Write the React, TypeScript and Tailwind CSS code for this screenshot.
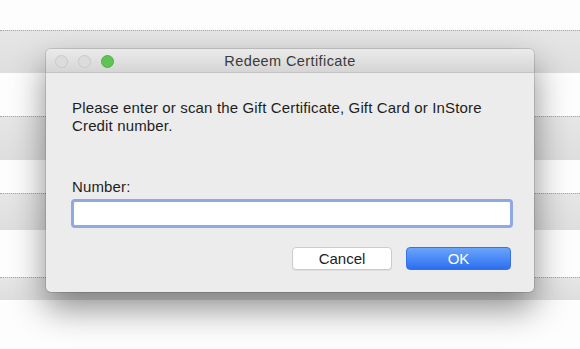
import React from "react";

const font = { fontFamily: '"Liberation Sans", Arial, sans-serif' };

const Stripe = ({ gray, dotted, h }: { gray?: boolean; dotted?: boolean; h: string }) => (
  <div
    className={`${h} ${gray ? "bg-gradient-to-b from-[#e6e6e6] to-[#dedede]" : "bg-[#fdfdfd]"} ${
      dotted ? "border-t border-dotted border-[#a8a8a8]" : ""
    }`}
  />
);

const Light = ({ color }: { color: string }) => (
  <span className={`w-[13px] h-[13px] rounded-full ${color}`} />
);

export default function App() {
  return (
    <div className="relative w-[580px] h-[349px] overflow-hidden bg-white" style={font}>
      {/* table rows behind the sheet */}
      <div className="flex flex-col">
        <Stripe h="h-[30px]" />
        <Stripe h="h-[43px]" gray dotted />
        <Stripe h="h-[43px]" />
        <Stripe h="h-[44px]" gray dotted />
        <Stripe h="h-[33px]" />
        <Stripe h="h-[37px]" gray dotted />
        <Stripe h="h-[47px]" />
        <Stripe h="h-[23px]" gray dotted />
        <Stripe h="h-[49px]" />
      </div>

      {/* dialog */}
      <div className="absolute left-[46px] top-[49px] w-[488px] h-[243px] rounded-[5px] bg-[#ececec] shadow-[0_0_0_1px_rgba(0,0,0,0.12),0_16px_34px_rgba(0,0,0,0.45)] overflow-hidden flex flex-col">
        <div className="relative h-[24px] shrink-0 flex items-center bg-gradient-to-b from-[#ebebeb] to-[#d5d5d5] border-b border-[#c4c4c4]">
          <div className="flex items-center gap-[10px] pl-[9px] pt-[1px]">
            <Light color="bg-[#dcdcdc] border border-[#c9c9c9]" />
            <Light color="bg-[#dcdcdc] border border-[#c9c9c9]" />
            <Light color="bg-[#5fc454] border border-[#52b048]" />
          </div>
          <div className="absolute inset-0 pt-[2px] flex items-center justify-center text-[14.5px] tracking-[0.4px] text-[#3a3a3a]">
            Redeem Certificate
          </div>
        </div>

        <div className="flex flex-col px-[26px] pt-[26px]">
          <p className="text-[15px] leading-[18px] tracking-[0.15px] text-[#1e1e1e]">
            Please enter or scan the Gift Certificate, Gift Card or InStore
            <br />
            Credit number.
          </p>

          <label className="mt-[43px] text-[15px] leading-[18px] tracking-[0.15px] text-[#1e1e1e]">Number:</label>
          <div className="mt-[3px] ml-[-1px] h-[29px] w-[442px] rounded-[4px] border-[3px] border-[#8ea9e4] bg-white" />

          <div className="mt-[19px] flex justify-end gap-[14px] mr-[-3px]">
            <button className="w-[100px] h-[23px] rounded-[4px] bg-white border border-[#cbcbcb] shadow-[0_1px_0_rgba(0,0,0,0.06)] text-[15px] text-[#222]">
              Cancel
            </button>
            <button className="w-[105px] h-[23px] rounded-[4px] bg-gradient-to-b from-[#6aa4fb] to-[#2d6ef1] border border-[#3a72e6] text-[15px] text-white">
              OK
            </button>
          </div>
        </div>
      </div>
    </div>
  );
}
